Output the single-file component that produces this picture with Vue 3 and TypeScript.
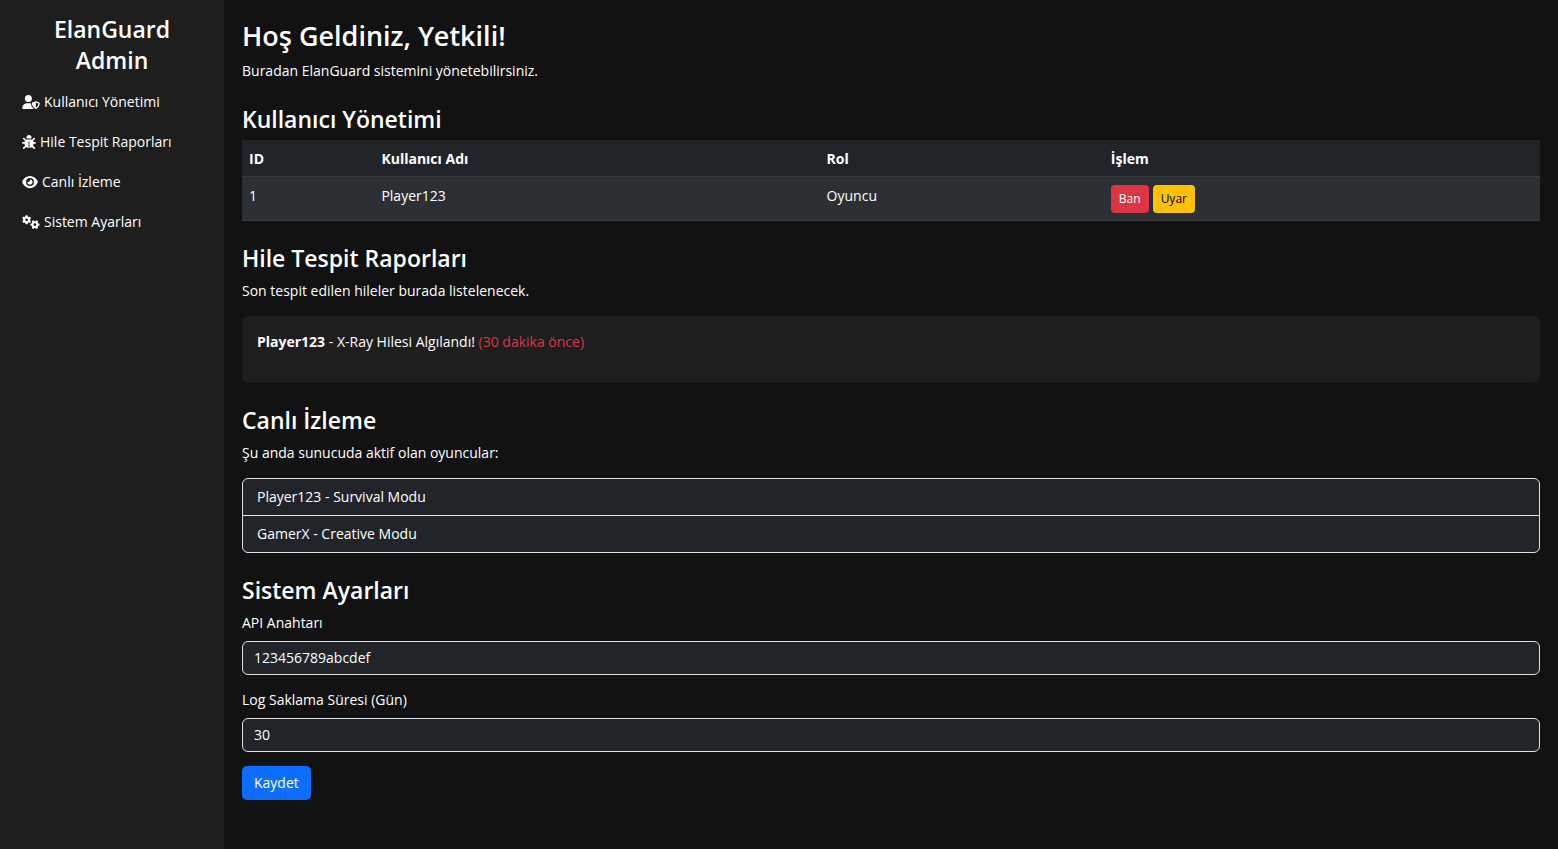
<script setup lang="ts">
import { ref } from 'vue'

interface NavItem {
  label: string
  href: string
  viewBox: string
  size: string
  path: string
}

interface User {
  id: number
  name: string
  role: string
}

const navItems: NavItem[] = [
  {
    label: 'Kullanıcı Yönetimi',
    href: '#users',
    viewBox: '0 0 640 512',
    size: 'wide',
    path: 'M224 256A128 128 0 1 0 224 0a128 128 0 1 0 0 256zm-45.7 48C79.8 304 0 383.8 0 482.3C0 498.7 13.3 512 29.7 512l388.6 0c1.8 0 3.5-.2 5.3-.5c-76.3-55.1-99.8-141-103.1-200.2c-16.1-4.8-33.1-7.3-50.7-7.3l-91.4 0zm308.8-78.3l-120 48C358 277.4 352 286.2 352 296c0 63.3 25.9 168.8 134.8 214.2c5.9 2.5 12.6 2.5 18.5 0C614.1 464.8 640 359.3 640 296c0-9.8-6-18.6-15.1-22.3l-120-48c-5.7-2.3-12.1-2.3-17.8 0zM591.4 312c-3.9 50.7-27.2 116.7-95.4 149.7V273.8L591.4 312z',
  },
  {
    label: 'Hile Tespit Raporları',
    href: '#reports',
    viewBox: '0 0 512 512',
    size: 'square',
    path: 'M256 0c53 0 96 43 96 96v3.6c0 15.7-12.7 28.4-28.4 28.4H188.4c-15.7 0-28.4-12.7-28.4-28.4V96c0-53 43-96 96-96zM41.4 105.4c12.5-12.5 32.8-12.5 45.3 0l64 64c.7 .7 1.3 1.4 1.9 2.1c14.2-7.3 30.4-11.4 47.5-11.4H312c17.1 0 33.2 4.1 47.5 11.4c.6-.7 1.2-1.4 1.9-2.1l64-64c12.5-12.5 32.8-12.5 45.3 0s12.5 32.8 0 45.3l-64 64c-.7 .7-1.4 1.3-2.1 1.9c6.2 12 10.1 25.3 11.1 39.5H480c17.7 0 32 14.3 32 32s-14.3 32-32 32H416c0 24.6-5.5 47.8-15.4 68.6c2.2 1.3 4.2 2.9 6 4.8l64 64c12.5 12.5 12.5 32.8 0 45.3s-32.8 12.5-45.3 0l-63.1-63.1c-24.5 21.8-55.8 36.2-90.3 39.6V240c0-8.8-7.2-16-16-16s-16 7.2-16 16V479.2c-34.5-3.4-65.8-17.8-90.3-39.6L86.6 502.6c-12.5 12.5-32.8 12.5-45.3 0s-12.5-32.8 0-45.3l64-64c1.9-1.9 3.9-3.4 6-4.8C101.5 367.8 96 344.6 96 320H32c-17.7 0-32-14.3-32-32s14.3-32 32-32H96.3c1.1-14.1 5-27.5 11.1-39.5c-.7-.6-1.4-1.2-2.1-1.9l-64-64c-12.5-12.5-12.5-32.8 0-45.3z',
  },
  {
    label: 'Canlı İzleme',
    href: '#live',
    viewBox: '0 0 576 512',
    size: 'medium',
    path: 'M288 32c-80.8 0-145.5 36.8-192.6 80.6C48.6 156 17.3 208 2.5 243.7c-3.3 7.9-3.3 16.7 0 24.6C17.3 304 48.6 356 95.4 399.4C142.5 443.2 207.2 480 288 480s145.5-36.8 192.6-80.6c46.8-43.5 78.1-95.4 93-131.1c3.3-7.9 3.3-16.7 0-24.6c-14.9-35.7-46.2-87.7-93-131.1C433.5 68.8 368.8 32 288 32zM144 256a144 144 0 1 1 288 0 144 144 0 1 1 -288 0zm144-64c0 35.3-28.7 64-64 64c-7.1 0-13.9-1.2-20.3-3.3c-5.5-1.8-11.9 1.6-11.7 7.4c.3 6.9 1.3 13.8 3.2 20.7c13.7 51.2 66.4 81.6 117.6 67.9s81.6-66.4 67.9-117.6c-11.1-41.5-47.8-69.4-88.6-71.1c-5.8-.2-9.2 6.1-7.4 11.7c2.1 6.4 3.3 13.2 3.3 20.3z',
  },
  {
    label: 'Sistem Ayarları',
    href: '#settings',
    viewBox: '0 0 640 512',
    size: 'wide',
    path: 'M308.5 135.3c7.1-6.3 9.9-16.2 6.2-25c-2.3-5.3-4.8-10.5-7.6-15.5L304 89.4c-3-5-6.3-9.9-9.8-14.6c-5.7-7.6-15.7-10.1-24.7-7.1l-28.2 9.3c-10.7-8.8-23-16-36.2-20.9L199 27.1c-1.9-9.3-9.1-16.7-18.5-17.8C173.9 8.4 167.2 8 160.4 8h-.7c-6.8 0-13.5 .4-20.1 1.2c-9.4 1.1-16.6 8.6-18.5 17.8L115 56.1c-13.3 5-25.5 12.1-36.2 20.9L50.5 67.8c-9-3-19-.5-24.7 7.1c-3.5 4.7-6.8 9.6-9.9 14.6l-3 5.3c-2.8 5-5.3 10.2-7.6 15.6c-3.7 8.7-.9 18.6 6.2 25l22.2 19.8C32.6 161.9 32 168.9 32 176s.6 14.1 1.7 20.9L11.5 216.7c-7.1 6.3-9.9 16.2-6.2 25c2.3 5.3 4.8 10.5 7.6 15.6l3 5.2c3 5.1 6.3 9.9 9.9 14.6c5.7 7.6 15.7 10.1 24.7 7.1l28.2-9.3c10.7 8.8 23 16 36.2 20.9l6.1 29.1c1.9 9.3 9.1 16.7 18.5 17.8c6.7 .8 13.5 1.2 20.4 1.2s13.7-.4 20.4-1.2c9.4-1.1 16.6-8.6 18.5-17.8l6.1-29.1c13.3-5 25.5-12.1 36.2-20.9l28.2 9.3c9 3 19 .5 24.7-7.1c3.5-4.7 6.8-9.5 9.8-14.6l3.1-5.4c2.8-5 5.3-10.2 7.6-15.5c3.7-8.7 .9-18.6-6.2-25l-22.2-19.8c1.1-6.8 1.7-13.8 1.7-20.9s-.6-14.1-1.7-20.9l22.2-19.8zM112 176a48 48 0 1 1 96 0 48 48 0 1 1 -96 0zM504.7 500.5c6.3 7.1 16.2 9.9 25 6.2c5.3-2.3 10.5-4.8 15.5-7.6l5.4-3.1c5-3 9.9-6.3 14.6-9.8c7.6-5.7 10.1-15.7 7.1-24.7l-9.3-28.2c8.8-10.7 16-23 20.9-36.2l29.1-6.1c9.3-1.9 16.7-9.1 17.8-18.5c.8-6.7 1.2-13.5 1.2-20.4s-.4-13.7-1.2-20.4c-1.1-9.4-8.6-16.6-17.8-18.5L583.9 307c-5-13.3-12.1-25.5-20.9-36.2l9.3-28.2c3-9 .5-19-7.1-24.7c-4.7-3.5-9.6-6.8-14.6-9.9l-5.3-3c-5-2.8-10.2-5.3-15.6-7.6c-8.7-3.7-18.6-.9-25 6.2l-19.8 22.2c-6.8-1.1-13.8-1.7-20.9-1.7s-14.1 .6-20.9 1.7l-19.8-22.2c-6.3-7.1-16.2-9.9-25-6.2c-5.3 2.3-10.5 4.8-15.6 7.6l-5.2 3c-5.1 3-9.9 6.3-14.6 9.9c-7.6 5.7-10.1 15.7-7.1 24.7l9.3 28.2c-8.8 10.7-16 23-20.9 36.2L315.1 313c-9.3 1.9-16.7 9.1-17.8 18.5c-.8 6.7-1.2 13.5-1.2 20.4s.4 13.7 1.2 20.4c1.1 9.4 8.6 16.6 17.8 18.5l29.1 6.1c5 13.3 12.1 25.5 20.9 36.2l-9.3 28.2c-3 9-.5 19 7.1 24.7c4.7 3.5 9.5 6.8 14.6 9.8l5.4 3.1c5 2.8 10.2 5.3 15.5 7.6c8.7 3.7 18.6 .9 25-6.2l19.8-22.2c6.8 1.1 13.8 1.7 20.9 1.7s14.1-.6 20.9-1.7l19.8 22.2zM464 304a48 48 0 1 1 0 96 48 48 0 1 1 0-96z',
  },
]

const users = ref<User[]>([{ id: 1, name: 'Player123', role: 'Oyuncu' }])
const activePlayers = ref<string[]>(['Player123 - Survival Modu', 'GamerX - Creative Modu'])
const apiKey = ref('123456789abcdef')
const logDays = ref('30')
</script>

<template>
  <div class="layout">
    <aside class="sidebar">
      <h2 class="brand">ElanGuard Admin</h2>
      <nav>
        <a v-for="item in navItems" :key="item.href" class="nav-link" :href="item.href">
          <svg :class="['icon', item.size]" :viewBox="item.viewBox" aria-hidden="true">
            <path :d="item.path" fill="currentColor" />
          </svg>
          <span>{{ item.label }}</span>
        </a>
      </nav>
    </aside>

    <main class="content">
      <h1>Hoş Geldiniz, Yetkili!</h1>
      <p>Buradan ElanGuard sistemini yönetebilirsiniz.</p>

      <section id="users">
        <h2>Kullanıcı Yönetimi</h2>
        <table>
          <thead>
            <tr>
              <th class="col-id" scope="col">ID</th>
              <th class="col-name" scope="col">Kullanıcı Adı</th>
              <th class="col-role" scope="col">Rol</th>
              <th scope="col">İşlem</th>
            </tr>
          </thead>
          <tbody>
            <tr v-for="user in users" :key="user.id">
              <td>{{ user.id }}</td>
              <td>{{ user.name }}</td>
              <td>{{ user.role }}</td>
              <td>
                <div class="actions">
                  <button type="button" class="btn small danger">Ban</button>
                  <button type="button" class="btn small warning">Uyar</button>
                </div>
              </td>
            </tr>
          </tbody>
        </table>
      </section>

      <section id="reports">
        <h2>Hile Tespit Raporları</h2>
        <p>Son tespit edilen hileler burada listelenecek.</p>
        <div class="card">
          <p>
            <strong>Player123</strong> - X-Ray Hilesi Algılandı!
            <span class="when">(30 dakika önce)</span>
          </p>
        </div>
      </section>

      <section id="live">
        <h2>Canlı İzleme</h2>
        <p>Şu anda sunucuda aktif olan oyuncular:</p>
        <ul>
          <li v-for="player in activePlayers" :key="player">{{ player }}</li>
        </ul>
      </section>

      <section id="settings">
        <h2>Sistem Ayarları</h2>
        <form @submit.prevent>
          <div class="field">
            <label for="api-key">API Anahtarı</label>
            <input id="api-key" v-model="apiKey" type="text" />
          </div>
          <div class="field">
            <label for="log-days">Log Saklama Süresi (Gün)</label>
            <input id="log-days" v-model="logDays" type="text" inputmode="numeric" />
          </div>
          <button type="submit" class="btn primary">Kaydet</button>
        </form>
      </section>
    </main>
  </div>
</template>

<style>
body {
  margin: 0;
  background: #121212;
}
</style>

<style scoped>
* {
  box-sizing: border-box;
}

.layout {
  display: flex;
  min-height: 100vh;
  background: #121212;
  color: #fff;
  font-family: 'Segoe UI', 'Open Sans', 'Noto Sans', sans-serif;
  font-size: 14px;
  line-height: 22px;
}

.sidebar {
  flex: 0 0 224px;
  padding: 14px;
  background: #1e1e1e;
}

h1,
h2,
p,
ul {
  margin: 0;
}

h1,
h2 {
  font-weight: 600;
}

h1 {
  margin-bottom: 7px;
  font-size: 27px;
  line-height: 34px;
}

h2 {
  margin-bottom: 6px;
  font-size: 23px;
  line-height: 30px;
}

.brand {
  margin: 0 24px 6px;
  line-height: 31px;
  text-align: center;
}

.nav-link {
  display: flex;
  align-items: center;
  gap: 4px;
  padding: 9px 8px;
  color: #fff;
  text-decoration: none;
}

.icon {
  flex: none;
  height: 14px;
}

.icon.wide {
  width: 18px;
}

.icon.medium {
  width: 16px;
}

.icon.square {
  width: 14px;
}

.content {
  flex: 1;
  min-width: 0;
  padding: 19px 18px;
}

section {
  margin-top: 22px;
}

section > p {
  margin: 7px 0 14px;
}

table {
  width: 100%;
  border-collapse: separate;
  border-spacing: 0;
  background: #212529;
}

th,
td {
  padding: 8px 7px 7px;
  border-bottom: 1px solid #373b3e;
  text-align: left;
  vertical-align: top;
}

th {
  padding-bottom: 6px;
  font-weight: 700;
}

td {
  background: #2c3034;
}

.col-id {
  width: 10.2%;
}

.col-name {
  width: 34.3%;
}

.col-role {
  width: 21.9%;
}

.actions {
  display: flex;
  gap: 4px;
}

.btn {
  padding: 6px 12px;
  border: 0;
  border-radius: 5px;
  font: inherit;
  cursor: pointer;
}

.btn.small {
  padding: 4px 8px;
  border-radius: 4px;
  font-size: 12px;
  line-height: 20px;
}

.danger {
  background: #dc3545;
  color: #fff;
}

.warning {
  background: #ffc107;
  color: #000;
}

.primary {
  background: #0d6efd;
  color: #fff;
}

.card {
  min-height: 67px;
  padding: 14px;
  border: 1px solid #1b1b1b;
  border-radius: 6px;
  background: #1e1e1e;
}

.when {
  color: #dc3545;
}

ul {
  padding: 0;
  border: 1px solid #dee2e6;
  border-radius: 6px;
  background: #212529;
  list-style: none;
}

li {
  padding: 7px 14px;
}

li + li {
  border-top: 1px solid #dee2e6;
}

form {
  margin-top: 7px;
}

.field {
  margin-bottom: 14px;
}

label {
  display: block;
  margin-bottom: 7px;
}

input {
  display: block;
  width: 100%;
  padding: 5px 11px;
  border: 1px solid #dee2e6;
  border-radius: 6px;
  background: #212529;
  color: #fff;
  font: inherit;
}
</style>
